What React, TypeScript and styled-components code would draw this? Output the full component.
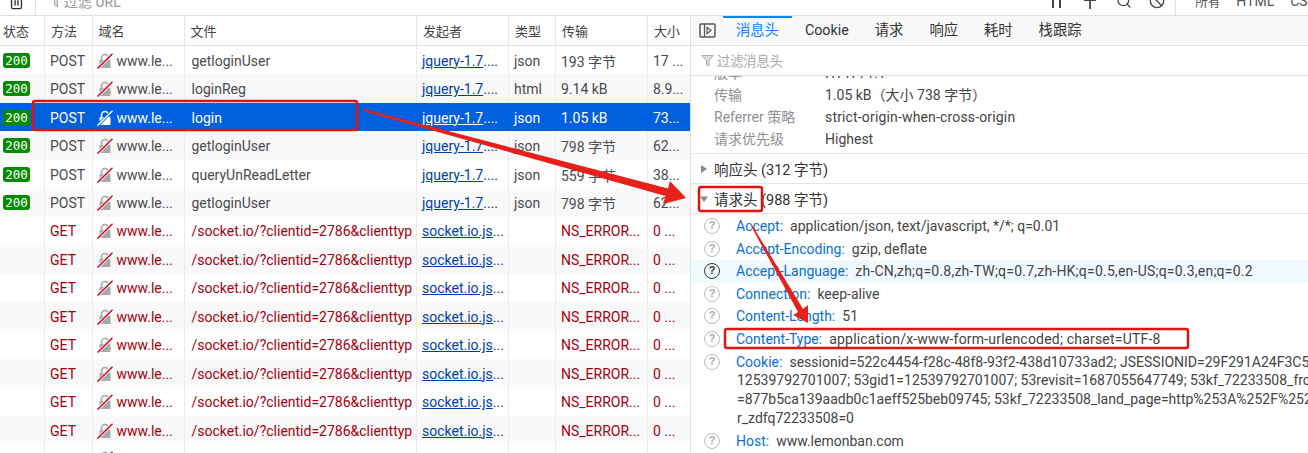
import React from "react";
import styled, { createGlobalStyle } from "styled-components";
import { Search, Ban, Trash2 } from "lucide-react";

const Global = createGlobalStyle`
  html, body { margin: 0; padding: 0; background: #fff; }
  body { width: 1308px; height: 453px; overflow: hidden; font-family: Roboto, "Noto Sans CJK SC", sans-serif; color: #38383d; font-size: 14px; }
`;
const Page = styled.div`position: relative; width: 1308px; height: 453px; overflow: hidden;`;
const Toolbar = styled.div`height: 15px; border-bottom: 1px solid #e0e0e2; overflow: hidden; box-sizing: content-box;`;
const ToolInner = styled.div`display: flex; align-items: center; height: 30px; margin-top: -14px; color: #777;`;
const TrashBtn = styled.div`display: flex; margin-left: 8px; color: #333;`;
const ToolDivider = styled.div`width: 1px; height: 30px; background: #e0e0e2; margin-left: ${p => p.$ml}px;`;
const UrlFilter = styled.div`display: flex; align-items: center; gap: 2px; margin-left: 14px; color: #999; font-size: 14px; flex: 1;`;
const ToolIcon = styled.div`display: flex; color: #444; margin-right: ${p => p.$mr}px;`;
const ToolText = styled.div`color: #555; font-size: ${p => p.$fs ?? 14}px; margin-left: ${p => p.$ml}px; margin-right: ${p => p.$mr ?? 0}px; white-space: nowrap;`;
const Main = styled.div`display: flex; height: 437px;`;
const Table = styled.div`width: 690px; flex: none; overflow: hidden;`;
const COLS = "44px 47.5px 92px 232.5px 92px 47px 92px 43.5px";
const HeaderRow = styled.div`display: grid; grid-template-columns: ${COLS}; height: 29px; border-bottom: 1px solid #e0e0e2; background: #fff;`;
const HeadCell = styled.div`padding-left: ${p => p.$pl ?? 6}px; font-size: 13px; line-height: 31px; color: #444; border-left: ${p => p.$first ? "none" : "1px solid #e5e5e7"}; white-space: nowrap;`;
const Row = styled.div`
  display: grid; grid-template-columns: ${COLS}; height: 28.46px; align-items: stretch;
  background: ${p => p.$sel ? "#0060df" : p.$alt ? "#f9f9fa" : "#fff"};
  color: ${p => p.$sel ? "#fff" : p.$err ? "#a4000f" : "#4a4a4f"};
`;
const Cell = styled.div`
  display: flex; align-items: center; overflow: hidden; white-space: nowrap; font-size: 14px; box-sizing: border-box;
  padding-left: ${p => p.$pl ?? 5}px; padding-top: 1px;
  border-left: ${p => p.$first ? "none" : p.$sel ? "1px solid transparent" : "1px solid #ececee"};
`;
const Badge = styled.span`
  display: block; width: 27px; height: 15px; margin-left: -1px; margin-top: -1px; border-radius: 3px; background: #058b00; color: #fff;
  font: 12.5px/15px "DejaVu Sans Mono", "Liberation Mono", monospace; text-align: center;
`;
const LinkText = styled.span`color: ${p => p.$sel ? "#fff" : "#003eaa"}; text-decoration: underline;`;
const LinkDots = styled.span`color: ${p => p.$sel ? "#fff" : "#003eaa"};`;
const Side = styled.div`flex: 1; min-width: 0; border-left: 1px solid #e0e0e2; overflow: hidden;`;
const Tabs = styled.div`display: flex; align-items: center; height: 29px; background: #f9f9fa; border-bottom: 1px solid #e0e0e2;`;
const SideToggle = styled.div`display: flex; margin: 0 7px 0 8px;`;
const Tab = styled.div`
  position: relative; padding: 0 13px; line-height: 29px; font-size: 14.3px; color: ${p => p.$on ? "#0a84ff" : "#333"};
  ${p => p.$on ? "&::before{content:'';position:absolute;left:0;right:0;top:0;height:2px;background:#0a84ff;}" : ""}
`;
const FilterBar = styled.div`display: flex; align-items: center; gap: 3px; height: 29px; padding-left: 10px; border-bottom: 1px solid #e0e0e2; color: #aaa; font-size: 13.2px; background: #fff; position: relative; z-index: 1;`;
const Scroll = styled.div`margin-top: -14px;`;
const InfoRow = styled.div`display: grid; grid-template-columns: 111px 1fr; height: 22px; line-height: 22px; padding-left: 23px; white-space: nowrap;`;
const InfoLabel = styled.div`color: #8f8f94; font-size: 14px;`;
const InfoValue = styled.div`color: #444; font-size: 14px; letter-spacing: ${p => p.$ls ?? 0}px;`;
const Section = styled.div`display: flex; align-items: center; height: 29px; border-top: 1px solid #e5e5e7; font-size: 14.5px; color: #333; margin-top: ${p => p.$mt ?? 0}px;`;
const Tri = styled.svg`width: 8px; height: 8px; margin: 0 6px 0 9px; flex: none;`;
const SectionEnd = styled.div`border-top: 1px solid #e5e5e7; height: 1px;`;
const HeaderItem = styled.div`
  display: flex; height: ${p => p.$h ?? 22.6}px; padding-left: 13px; background: ${p => p.$hot ? "#f0f9fe" : "transparent"};
  white-space: nowrap; line-height: 22.6px; font-size: 14px;
`;
const Help = styled.div`
  flex: none; box-sizing: border-box; width: 16px; height: 16px; margin-top: 3px; border-radius: 50%; text-align: center;
  border: 1.5px solid ${p => p.$hot ? "#333" : "#bbb"}; color: ${p => p.$hot ? "#333" : "#aaa"};
  font: bold 11px/13px "Liberation Sans", sans-serif;
`;
const HeaderBody = styled.div`margin-left: 16px;`;
const HeaderName = styled.span`color: #0a6fd0; margin-right: 7px;`;
const HeaderValue = styled.span`color: #444; letter-spacing: ${p => p.$ls ?? 0}px;`;
const CookieLines = styled.div`margin-left: 1px; line-height: 18.7px; color: #444; margin-top: -2px;`;
const Overlay = styled.svg`position: absolute; left: 0; top: 0; width: 1308px; height: 453px; pointer-events: none;`;

const Lock = ({ sel }: { sel?: boolean }) => (
  <svg width="16" height="16" viewBox="0 0 16 16" style={{ flex: "none", marginRight: 4 }}>
    <path d="M4.5 7V5a3.5 3.5 0 0 1 7 0v2" fill="none" stroke={sel ? "#fff" : "#a8a8a8"} strokeWidth="1.6" />
    <rect x="2.5" y="7" width="11" height="8" rx="1" fill={sel ? "#fff" : "#a8a8a8"} />
    <path d="M0.8 15.4 15.2 1" stroke={sel ? "#0060df" : "#fff"} strokeWidth="3" />
    <path d="M0.5 15.5 15.5 0.8" stroke={sel ? "#fff" : "#d70022"} strokeWidth="1.5" />
  </svg>
);

const ok = [
  ["POST", "getloginUser", "json", "193 字节", "17 ..."],
  ["POST", "loginReg", "html", "9.14 kB", "8.9..."],
  ["POST", "login", "json", "1.05 kB", "73..."],
  ["POST", "getloginUser", "json", "798 字节", "62..."],
  ["POST", "queryUnReadLetter", "json", "559 字节", "38..."],
  ["POST", "getloginUser", "json", "798 字节", "62..."],
];
const bad = Array.from({ length: 9 }, () => null);
const heads: [string, string, number, boolean?][] = [
  ["Accept:", "application/json, text/javascript, */*; q=0.01", 0],
  ["Accept-Encoding:", "gzip, deflate", 0],
  ["Accept-Language:", "zh-CN,zh;q=0.8,zh-TW;q=0.7,zh-HK;q=0.5,en-US;q=0.3,en;q=0.2", 0.22, true],
  ["Connection:", "keep-alive", 0],
  ["Content-Length:", "51", 0],
  ["Content-Type:", "application/x-www-form-urlencoded; charset=UTF-8", 0.2],
];

export default function App() {
  return (
    <Page>
      <Global />
      <Toolbar>
        <ToolInner>
          <TrashBtn><Trash2 size={17} /></TrashBtn>
          <ToolDivider $ml={10} />
          <UrlFilter>
            <svg width="12" height="14" viewBox="0 0 12 14"><path d="M1 1h10L7.500 6.500V13L4.500 11V6.500z" fill="#ddd" stroke="#aaa" /></svg>
            过滤 URL
          </UrlFilter>
          <ToolIcon $mr={18}><svg width="14" height="16" viewBox="0 0 14 16"><path d="M3 1v14M10 1v14" stroke="#444" strokeWidth="2" /></svg></ToolIcon>
          <ToolIcon $mr={18}><svg width="16" height="16" viewBox="0 0 16 16"><path d="M2 7h12M8 7v9" stroke="#444" strokeWidth="1.800" /></svg></ToolIcon>
          <ToolIcon $mr={17}><Search size={16} /></ToolIcon>
          <ToolIcon $mr={0}><Ban size={16} /></ToolIcon>
          <ToolDivider $ml={10} />
          <ToolText $ml={19} $fs={12.5}>所有</ToolText>
          <ToolText $ml={16}>HTML</ToolText>
          <ToolText $ml={16} $mr={-8}>CSS</ToolText>
        </ToolInner>
      </Toolbar>
      <Main>
        <Table>
          <HeaderRow>
            <HeadCell $first $pl={3}>状态</HeadCell>
            <HeadCell>方法</HeadCell>
            <HeadCell>域名</HeadCell>
            <HeadCell>文件</HeadCell>
            <HeadCell>发起者</HeadCell>
            <HeadCell>类型</HeadCell>
            <HeadCell>传输</HeadCell>
            <HeadCell>大小</HeadCell>
          </HeaderRow>
          {ok.map((r, i) => {
            const sel = i === 2;
            return (
              <Row key={i} $alt={i % 2 === 1} $sel={sel}>
                <Cell $first $pl={4}><Badge>200</Badge></Cell>
                <Cell $sel={sel}>{r[0]}</Cell>
                <Cell $sel={sel} $pl={4}><Lock sel={sel} />www.le...</Cell>
                <Cell $sel={sel} $pl={7}>{r[1]}</Cell>
                <Cell $sel={sel}><LinkText $sel={sel}>jquery-1.7</LinkText><LinkDots $sel={sel}>....</LinkDots></Cell>
                <Cell $sel={sel}>{r[2]}</Cell>
                <Cell $sel={sel}>{r[3]}</Cell>
                <Cell $sel={sel}>{r[4]}</Cell>
              </Row>
            );
          })}
          {bad.map((_, i) => (
            <Row key={i} $alt={i % 2 === 1} $err>
              <Cell $first />
              <Cell>GET</Cell>
              <Cell $pl={4}><Lock />www.le...</Cell>
              <Cell $pl={7}>/socket.io/?clientid=2786&amp;clienttyp</Cell>
              <Cell><LinkText>socket.io.js</LinkText><LinkDots>...</LinkDots></Cell>
              <Cell />
              <Cell>NS_ERROR...</Cell>
              <Cell>0 ...</Cell>
            </Row>
          ))}
        </Table>
        <Side>
          <Tabs>
            <SideToggle>
              <svg width="17" height="15" viewBox="0 0 17 15"><rect x="1" y="1" width="15" height="13" rx="1" fill="none" stroke="#555" strokeWidth="1.5" /><path d="M5.5 1v13" stroke="#555" strokeWidth="1.3" /><path d="M8 4.5l4 3-4 3z" fill="none" stroke="#555" strokeWidth="1.2" /></svg>
            </SideToggle>
            <Tab $on>消息头</Tab>
            <Tab>Cookie</Tab>
            <Tab>请求</Tab>
            <Tab>响应</Tab>
            <Tab>耗时</Tab>
            <Tab>栈跟踪</Tab>
          </Tabs>
          <FilterBar>
            <svg width="13" height="13" viewBox="0 0 13 13"><path d="M1 1.5h11L8 6.5V12L5.500 10.500v-4z" fill="#ddd" stroke="#aaa" /></svg>
            过滤消息头
          </FilterBar>
          <Scroll>
            <InfoRow><InfoLabel>版本</InfoLabel><InfoValue>HTTP/1.1</InfoValue></InfoRow>
            <InfoRow><InfoLabel>传输</InfoLabel><InfoValue>1.05 kB（大小 738 字节）</InfoValue></InfoRow>
            <InfoRow><InfoLabel>Referrer 策略</InfoLabel><InfoValue $ls={0.16}>strict-origin-when-cross-origin</InfoValue></InfoRow>
            <InfoRow><InfoLabel>请求优先级</InfoLabel><InfoValue>Highest</InfoValue></InfoRow>
            <Section $mt={3}><Tri viewBox="0 0 8 8" style={{ height: 10 }}><path d="M1 0l6 4-6 4z" fill="#888" /></Tri>响应头 (312 字节)</Section>
            <Section><Tri viewBox="0 0 8 8"><path d="M0 1.500h8L4 7z" fill="#888" /></Tri>请求头 (988 字节)</Section>
            <SectionEnd />
            {heads.map(([n, v, ls, hot]) => (
              <HeaderItem key={n} $hot={hot}>
                <Help $hot={hot}>?</Help>
                <HeaderBody><HeaderName>{n}</HeaderName><HeaderValue $ls={ls}>{v}</HeaderValue></HeaderBody>
              </HeaderItem>
            ))}
            <HeaderItem $h={79}>
              <Help>?</Help>
              <HeaderBody>
                <HeaderName>Cookie:</HeaderName><HeaderValue>sessionid=522c4454-f28c-48f8-93f2-438d10733ad2; JSESSIONID=29F291A24F3C54</HeaderValue>
                <CookieLines>
                  12539792701007; 53gid1=12539792701007; 53revisit=1687055647749; 53kf_72233508_from<br />
                  =877b5ca139aadb0c1aeff525beb09745; 53kf_72233508_land_page=http%253A%252F%252<br />
                  r_zdfq72233508=0
                </CookieLines>
              </HeaderBody>
            </HeaderItem>
            <HeaderItem>
              <Help>?</Help>
              <HeaderBody><HeaderName>Host:</HeaderName><HeaderValue>www.lemonban.com</HeaderValue></HeaderBody>
            </HeaderItem>
          </Scroll>
        </Side>
      </Main>
      <Overlay viewBox="0 0 1308 453">
        <g fill="none" stroke="#e0140f" strokeWidth="2.5">
          <rect x="33" y="101" width="324" height="29" rx="2" />
          <rect x="699" y="187" width="63" height="24" rx="2" />
          <rect x="725" y="329" width="463" height="19" rx="2" />
        </g>
        <polygon points="364,109 668,188.500 670,181 686,198 663,204 665.500,196 363,111" fill="#e8201a" />
        <polygon points="752,225 803,309 808,305 808,323 793,315 798,312 751,226" fill="#e8201a" />
      </Overlay>
    </Page>
  );
}
